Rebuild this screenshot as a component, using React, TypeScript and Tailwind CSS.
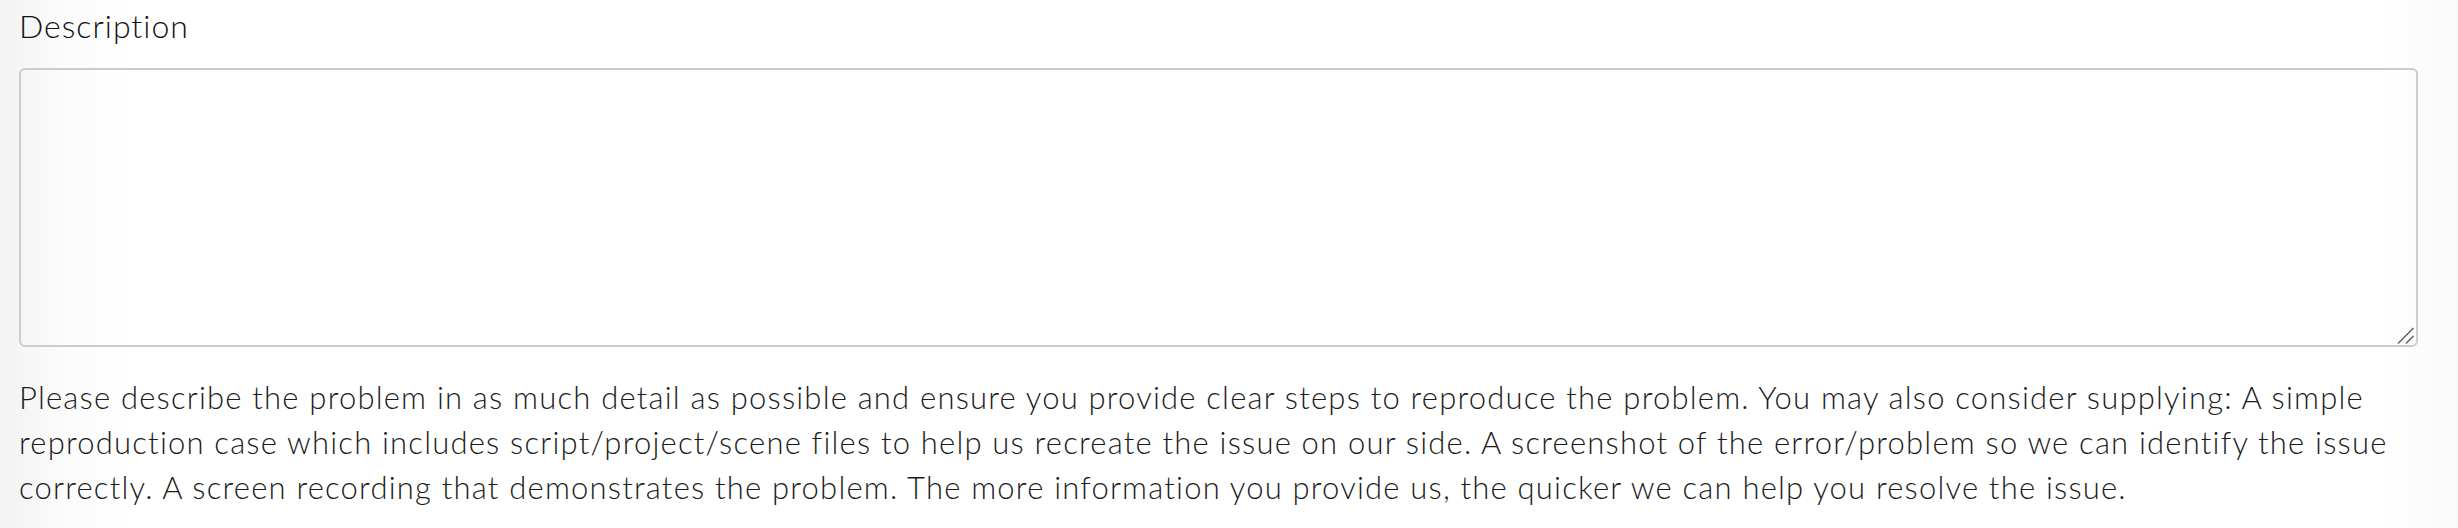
import React from "react";

export default function App() {
  return (
    <div
      className="min-h-[528px] w-full bg-[linear-gradient(to_right,#f2f2f2_0px,#fbfbfb_60px,#ffffff_130px,#ffffff_2380px,#f9f9f9_2458px)] pl-[19px] pr-[40px] pt-[4px] text-[#333333]"
      style={{ fontFamily: "Lato, 'Noto Sans', sans-serif" }}
    >
      <label
        htmlFor="desc"
        className="block text-[32px] font-light leading-[44px] tracking-[1px] text-[#111111]"
      >
        Description
      </label>
      <div className="relative mt-[20px] w-[2399px]">
        <textarea
          id="desc"
          className="block h-[279px] w-full resize-none rounded-[6px] border-2 border-[#cccccc] bg-transparent outline-none"
        />
        <svg
          className="pointer-events-none absolute bottom-0 right-0"
          width="24"
          height="24"
          viewBox="0 0 24 24"
        >
          <line x1="4" y1="20.5" x2="19.5" y2="5" stroke="#666666" strokeWidth="1.6" />
          <line x1="12" y1="20.5" x2="19.5" y2="13" stroke="#666666" strokeWidth="1.6" />
        </svg>
      </div>
      <p className="mt-[28px] text-[31px] font-light leading-[45px] tracking-[1.2px] text-[#1c1c1c]">
        Please describe the problem in as much detail as possible and ensure you
        provide clear steps to reproduce the problem. You may also consider
        supplying: A simple
        <br />
        reproduction case which includes script/project/scene files to help us
        recreate the issue on our side. A screenshot of the error/problem so we
        can identify the issue
        <br />
        correctly. A screen recording that demonstrates the problem. The more
        information you provide us, the quicker we can help you resolve the
        issue.
      </p>
    </div>
  );
}
